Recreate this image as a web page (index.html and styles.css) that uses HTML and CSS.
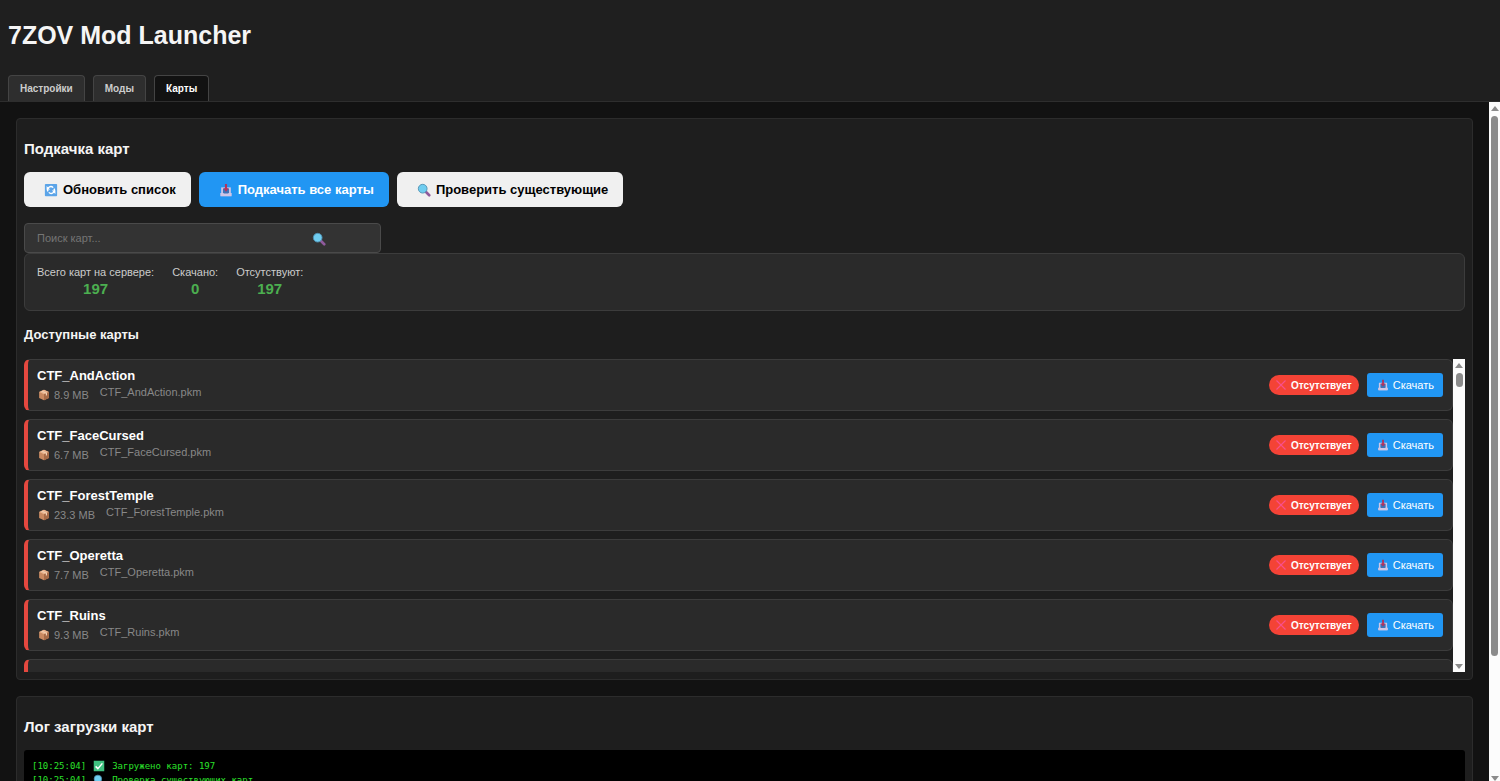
FILE: index.html
```html
<!DOCTYPE html>
<html lang="ru">
<head>
    <meta charset="UTF-8">
    <meta name="viewport" content="width=device-width, initial-scale=1.0">
    <title>7ZOV Mod Launcher</title>
    <link rel="stylesheet" href="styles.css">
</head>
<body>
    <svg class="sprite" aria-hidden="true">
        <symbol id="i-refresh" viewBox="0 0 16 16">
            <rect x="1" y="1" width="14" height="14" rx="1" fill="#5ba4e8"/>
            <path d="M4.500 9.500A3.700 3.700 0 0 1 10.500 5.300M11.500 6.500A3.700 3.700 0 0 1 5.500 10.700" fill="none" stroke="#fff" stroke-width="1.600"/>
            <path d="M3 3.500v4h4zM13 12.500v-4H9z" fill="#fff"/>
        </symbol>
        <symbol id="i-inbox" viewBox="0 0 16 16">
            <path d="M2.500 5h11v10h-11z" fill="#cfc6e6"/>
            <path d="M4.500 6.500h7V12h-7z" fill="#3f73b8"/>
            <path d="M1.500 11.500h3.500l1 1.500h4l1-1.500h3.500V15h-13z" fill="#cfc6e6"/>
            <path d="M6.800 1h2.400v5h2L8 10 4.800 6h2z" fill="#b0345f"/>
        </symbol>
        <symbol id="i-search" viewBox="0 0 16 16">
            <path d="M10 10l4 4" stroke="#8f5a9c" stroke-width="3" stroke-linecap="round"/>
            <circle cx="6.500" cy="6.500" r="5" fill="#6fcdf0" stroke="#4f8fb0" stroke-width="1"/>
        </symbol>
        <symbol id="i-box" viewBox="0 0 16 16">
            <path d="M8 1l6.500 3v8L8 15l-6.500-3V4z" fill="#c98a62"/>
            <path d="M8 1l6.500 3L8 7 1.500 4z" fill="#e8b48e"/>
            <path d="M8 7l6.500-3v8L8 15z" fill="#a56a47"/>
            <path d="M4 2.900l6.500 3v3l1.500-.7V5.200L5.600 2.200z" fill="#f0d0b4"/>
        </symbol>
        <symbol id="i-cross" viewBox="0 0 16 16">
            <path d="M2 2l12 12M14 2L2 14" stroke="#f8508c" stroke-width="1.500"/>
        </symbol>
        <symbol id="i-check" viewBox="0 0 16 16">
            <rect x="1" y="1" width="14" height="14" fill="#3fc07f"/>
            <path d="M3.500 8.500l3 3 6-7" fill="none" stroke="#fff" stroke-width="2"/>
        </symbol>
    </svg>

    <header class="header">
        <h1>7ZOV Mod Launcher</h1>
        <nav class="tabs">
            <button class="tab">Настройки</button>
            <button class="tab">Моды</button>
            <button class="tab active">Карты</button>
        </nav>
    </header>

    <div class="viewport">
        <main class="content">
            <section class="panel">
                <h2>Подкачка карт</h2>
                <div class="actions">
                    <button class="btn"><svg class="icon"><use href="#i-refresh"/></svg>Обновить список</button>
                    <button class="btn btn-primary"><svg class="icon"><use href="#i-inbox"/></svg>Подкачать все карты</button>
                    <button class="btn"><svg class="icon"><use href="#i-search"/></svg>Проверить существующие</button>
                </div>
                <div class="search-box">
                    <input type="text" class="search-input" placeholder="Поиск карт..." aria-label="Поиск карт">
                    <svg class="icon search-icon"><use href="#i-search"/></svg>
                </div>
                <div class="stats">
                    <div class="stat"><span>Всего карт на сервере:</span><strong>197</strong></div>
                    <div class="stat"><span>Скачано:</span><strong>0</strong></div>
                    <div class="stat"><span>Отсутствуют:</span><strong>197</strong></div>
                </div>
                <h3>Доступные карты</h3>
                <div class="maps">
                    <div class="map-list">
                        <div class="map-item">
                            <div class="map-info">
                                <div class="map-name">CTF_AndAction</div>
                                <div class="map-meta"><span class="map-size"><svg class="icon-small"><use href="#i-box"/></svg>8.9 MB</span><span>CTF_AndAction.pkm</span></div>
                            </div>
                            <span class="badge"><svg class="icon-small"><use href="#i-cross"/></svg>Отсутствует</span>
                            <button class="btn-download"><svg class="icon-small"><use href="#i-inbox"/></svg>Скачать</button>
                        </div>
                        <div class="map-item">
                            <div class="map-info">
                                <div class="map-name">CTF_FaceCursed</div>
                                <div class="map-meta"><span class="map-size"><svg class="icon-small"><use href="#i-box"/></svg>6.7 MB</span><span>CTF_FaceCursed.pkm</span></div>
                            </div>
                            <span class="badge"><svg class="icon-small"><use href="#i-cross"/></svg>Отсутствует</span>
                            <button class="btn-download"><svg class="icon-small"><use href="#i-inbox"/></svg>Скачать</button>
                        </div>
                        <div class="map-item">
                            <div class="map-info">
                                <div class="map-name">CTF_ForestTemple</div>
                                <div class="map-meta"><span class="map-size"><svg class="icon-small"><use href="#i-box"/></svg>23.3 MB</span><span>CTF_ForestTemple.pkm</span></div>
                            </div>
                            <span class="badge"><svg class="icon-small"><use href="#i-cross"/></svg>Отсутствует</span>
                            <button class="btn-download"><svg class="icon-small"><use href="#i-inbox"/></svg>Скачать</button>
                        </div>
                        <div class="map-item">
                            <div class="map-info">
                                <div class="map-name">CTF_Operetta</div>
                                <div class="map-meta"><span class="map-size"><svg class="icon-small"><use href="#i-box"/></svg>7.7 MB</span><span>CTF_Operetta.pkm</span></div>
                            </div>
                            <span class="badge"><svg class="icon-small"><use href="#i-cross"/></svg>Отсутствует</span>
                            <button class="btn-download"><svg class="icon-small"><use href="#i-inbox"/></svg>Скачать</button>
                        </div>
                        <div class="map-item">
                            <div class="map-info">
                                <div class="map-name">CTF_Ruins</div>
                                <div class="map-meta"><span class="map-size"><svg class="icon-small"><use href="#i-box"/></svg>9.3 MB</span><span>CTF_Ruins.pkm</span></div>
                            </div>
                            <span class="badge"><svg class="icon-small"><use href="#i-cross"/></svg>Отсутствует</span>
                            <button class="btn-download"><svg class="icon-small"><use href="#i-inbox"/></svg>Скачать</button>
                        </div>
                        <div class="map-item"></div>
                    </div>
                    <div class="scrollbar" aria-hidden="true">
                        <span class="arrow-up"></span>
                        <span class="thumb thumb-list"></span>
                        <span class="arrow-down"></span>
                    </div>
                </div>
            </section>

            <section class="panel">
                <h2>Лог загрузки карт</h2>
                <div class="log">
                    <div class="log-line">[10:25:04] <svg class="icon-small"><use href="#i-check"/></svg> Загружено карт: 197</div>
                    <div class="log-line">[10:25:04] <svg class="icon-small"><use href="#i-search"/></svg> Проверка существующих карт</div>
                </div>
            </section>
        </main>
        <div class="scrollbar scrollbar-page" aria-hidden="true">
            <span class="arrow-up"></span>
            <span class="thumb thumb-page"></span>
            <span class="arrow-down"></span>
        </div>
    </div>
</body>
</html>
```
FILE: styles.css
```css
* {
    box-sizing: border-box;
}

body {
    margin: 0;
    height: 100vh;
    display: flex;
    flex-direction: column;
    overflow: hidden;
    background: #121212;
    color: #f5f5f5;
    font-family: "Liberation Sans", Arial, sans-serif;
    font-size: 12px;
}

button,
input {
    font-family: inherit;
}

.sprite {
    display: none;
}

.icon {
    width: 14px;
    height: 14px;
    flex: none;
}

.icon-small {
    width: 12px;
    height: 12px;
    flex: none;
}

.header {
    flex: none;
    padding: 20px 8px 0;
    background: #1f1f1f;
    border-bottom: 1px solid #2e2e2e;
}

.header h1 {
    margin: 0 0 25px;
    font-size: 25px;
    line-height: 30px;
}

.tabs {
    display: flex;
    gap: 8px;
}

.tab {
    height: 26px;
    padding: 0 11px;
    background: #2e2e2e;
    border: 1px solid #444;
    border-bottom: none;
    border-radius: 4px 4px 0 0;
    color: #ccc;
    font-size: 10px;
    font-weight: bold;
    cursor: pointer;
}

.tab.active {
    background: #121212;
    color: #fff;
}

.viewport {
    flex: 1;
    min-height: 0;
    display: flex;
}

.content {
    flex: 1;
    min-width: 0;
    overflow: hidden;
    padding: 16px;
}

.panel {
    margin-bottom: 16px;
    padding: 7px;
    background: #1e1e1e;
    border: 1px solid #2c2c2c;
    border-radius: 4px;
}

.panel h2 {
    margin: 13px 0;
    font-size: 15px;
    line-height: 20px;
}

.panel h3 {
    margin: 16px 0;
    font-size: 13px;
    line-height: 16px;
}

.actions {
    display: flex;
    gap: 8px;
    margin-bottom: 16px;
}

.btn {
    display: flex;
    align-items: center;
    gap: 5px;
    height: 35px;
    padding: 0 15px 0 20px;
    background: #f0f0f0;
    border: none;
    border-radius: 6px;
    color: #000;
    font-size: 13px;
    font-weight: bold;
    cursor: pointer;
}

.btn-primary {
    background: #2196f3;
    color: #fff;
}

.search-box {
    position: relative;
    width: 357px;
    max-width: 100%;
}

.search-input {
    display: block;
    width: 100%;
    height: 30px;
    padding: 0 12px;
    background: #333;
    border: 1px solid #4a4a4a;
    border-radius: 4px;
    color: #fff;
    font-size: 11px;
}

.search-input::placeholder {
    color: #757575;
}

.search-icon {
    position: absolute;
    top: 9px;
    right: 55px;
}

.stats {
    display: flex;
    gap: 18px;
    height: 58px;
    padding: 11px 12px;
    background: #2a2a2a;
    border: 1px solid #3c3c3c;
    border-radius: 6px;
}

.stat {
    text-align: center;
    color: #ccc;
    font-size: 11px;
    line-height: 14px;
}

.stat strong {
    display: block;
    color: #4caf50;
    font-size: 15px;
    line-height: 20px;
}

.maps {
    display: flex;
    height: 313px;
}

.map-list {
    flex: 1;
    min-width: 0;
    overflow: hidden;
}

.map-item {
    display: flex;
    align-items: center;
    gap: 8px;
    height: 52px;
    margin-bottom: 8px;
    padding: 0 9px;
    background: #2a2a2a;
    border: 1px solid #3c3c3c;
    border-left: 4px solid #e5483f;
    border-radius: 6px;
}

.map-info {
    flex: 1;
}

.map-name {
    color: #fff;
    font-size: 13px;
    font-weight: bold;
    line-height: 16px;
}

.map-meta {
    display: flex;
    align-items: flex-start;
    gap: 11px;
    color: #888;
    font-size: 11px;
    line-height: 16px;
}

.map-size {
    display: flex;
    align-items: center;
    gap: 4px;
    padding: 3px 0 0 1px;
}

.badge {
    display: flex;
    align-items: center;
    gap: 4px;
    height: 20px;
    padding: 0 7px 0 6px;
    background: #f44336;
    border-radius: 10px;
    color: #fff;
    font-size: 10px;
    font-weight: bold;
}

.btn-download {
    display: flex;
    align-items: center;
    gap: 4px;
    height: 24px;
    padding: 0 9px 0 10px;
    background: #2196f3;
    border: none;
    border-radius: 3px;
    color: #fff;
    font-size: 11px;
    cursor: pointer;
}

.log {
    height: 200px;
    padding: 9px 8px;
    background: #000;
    border-radius: 3px;
    color: #2be02b;
    font-family: "DejaVu Sans Mono", monospace;
    font-size: 9px;
}

.log-line {
    display: flex;
    align-items: center;
    gap: 7px;
    height: 14px;
}

/* scrollbars */
.scrollbar {
    flex: none;
    width: 12px;
    display: flex;
    flex-direction: column;
    align-items: center;
    padding: 4px 0 3px;
    background: #fcfcfc;
}

.scrollbar-page {
    width: 11px;
    padding-bottom: 0;
}

.arrow-up,
.arrow-down {
    border: 4px solid transparent;
}

.arrow-up {
    border-top: none;
    border-bottom: 5px solid #8b8b8b;
}

.arrow-down {
    margin-top: auto;
    border-bottom: none;
    border-top: 5px solid #8b8b8b;
}

.thumb {
    width: 7px;
    margin-top: 5px;
    background: #8b8b8b;
    border-radius: 4px;
}

.thumb-list {
    height: 14px;
}

.thumb-page {
    height: 80%;
}
```
